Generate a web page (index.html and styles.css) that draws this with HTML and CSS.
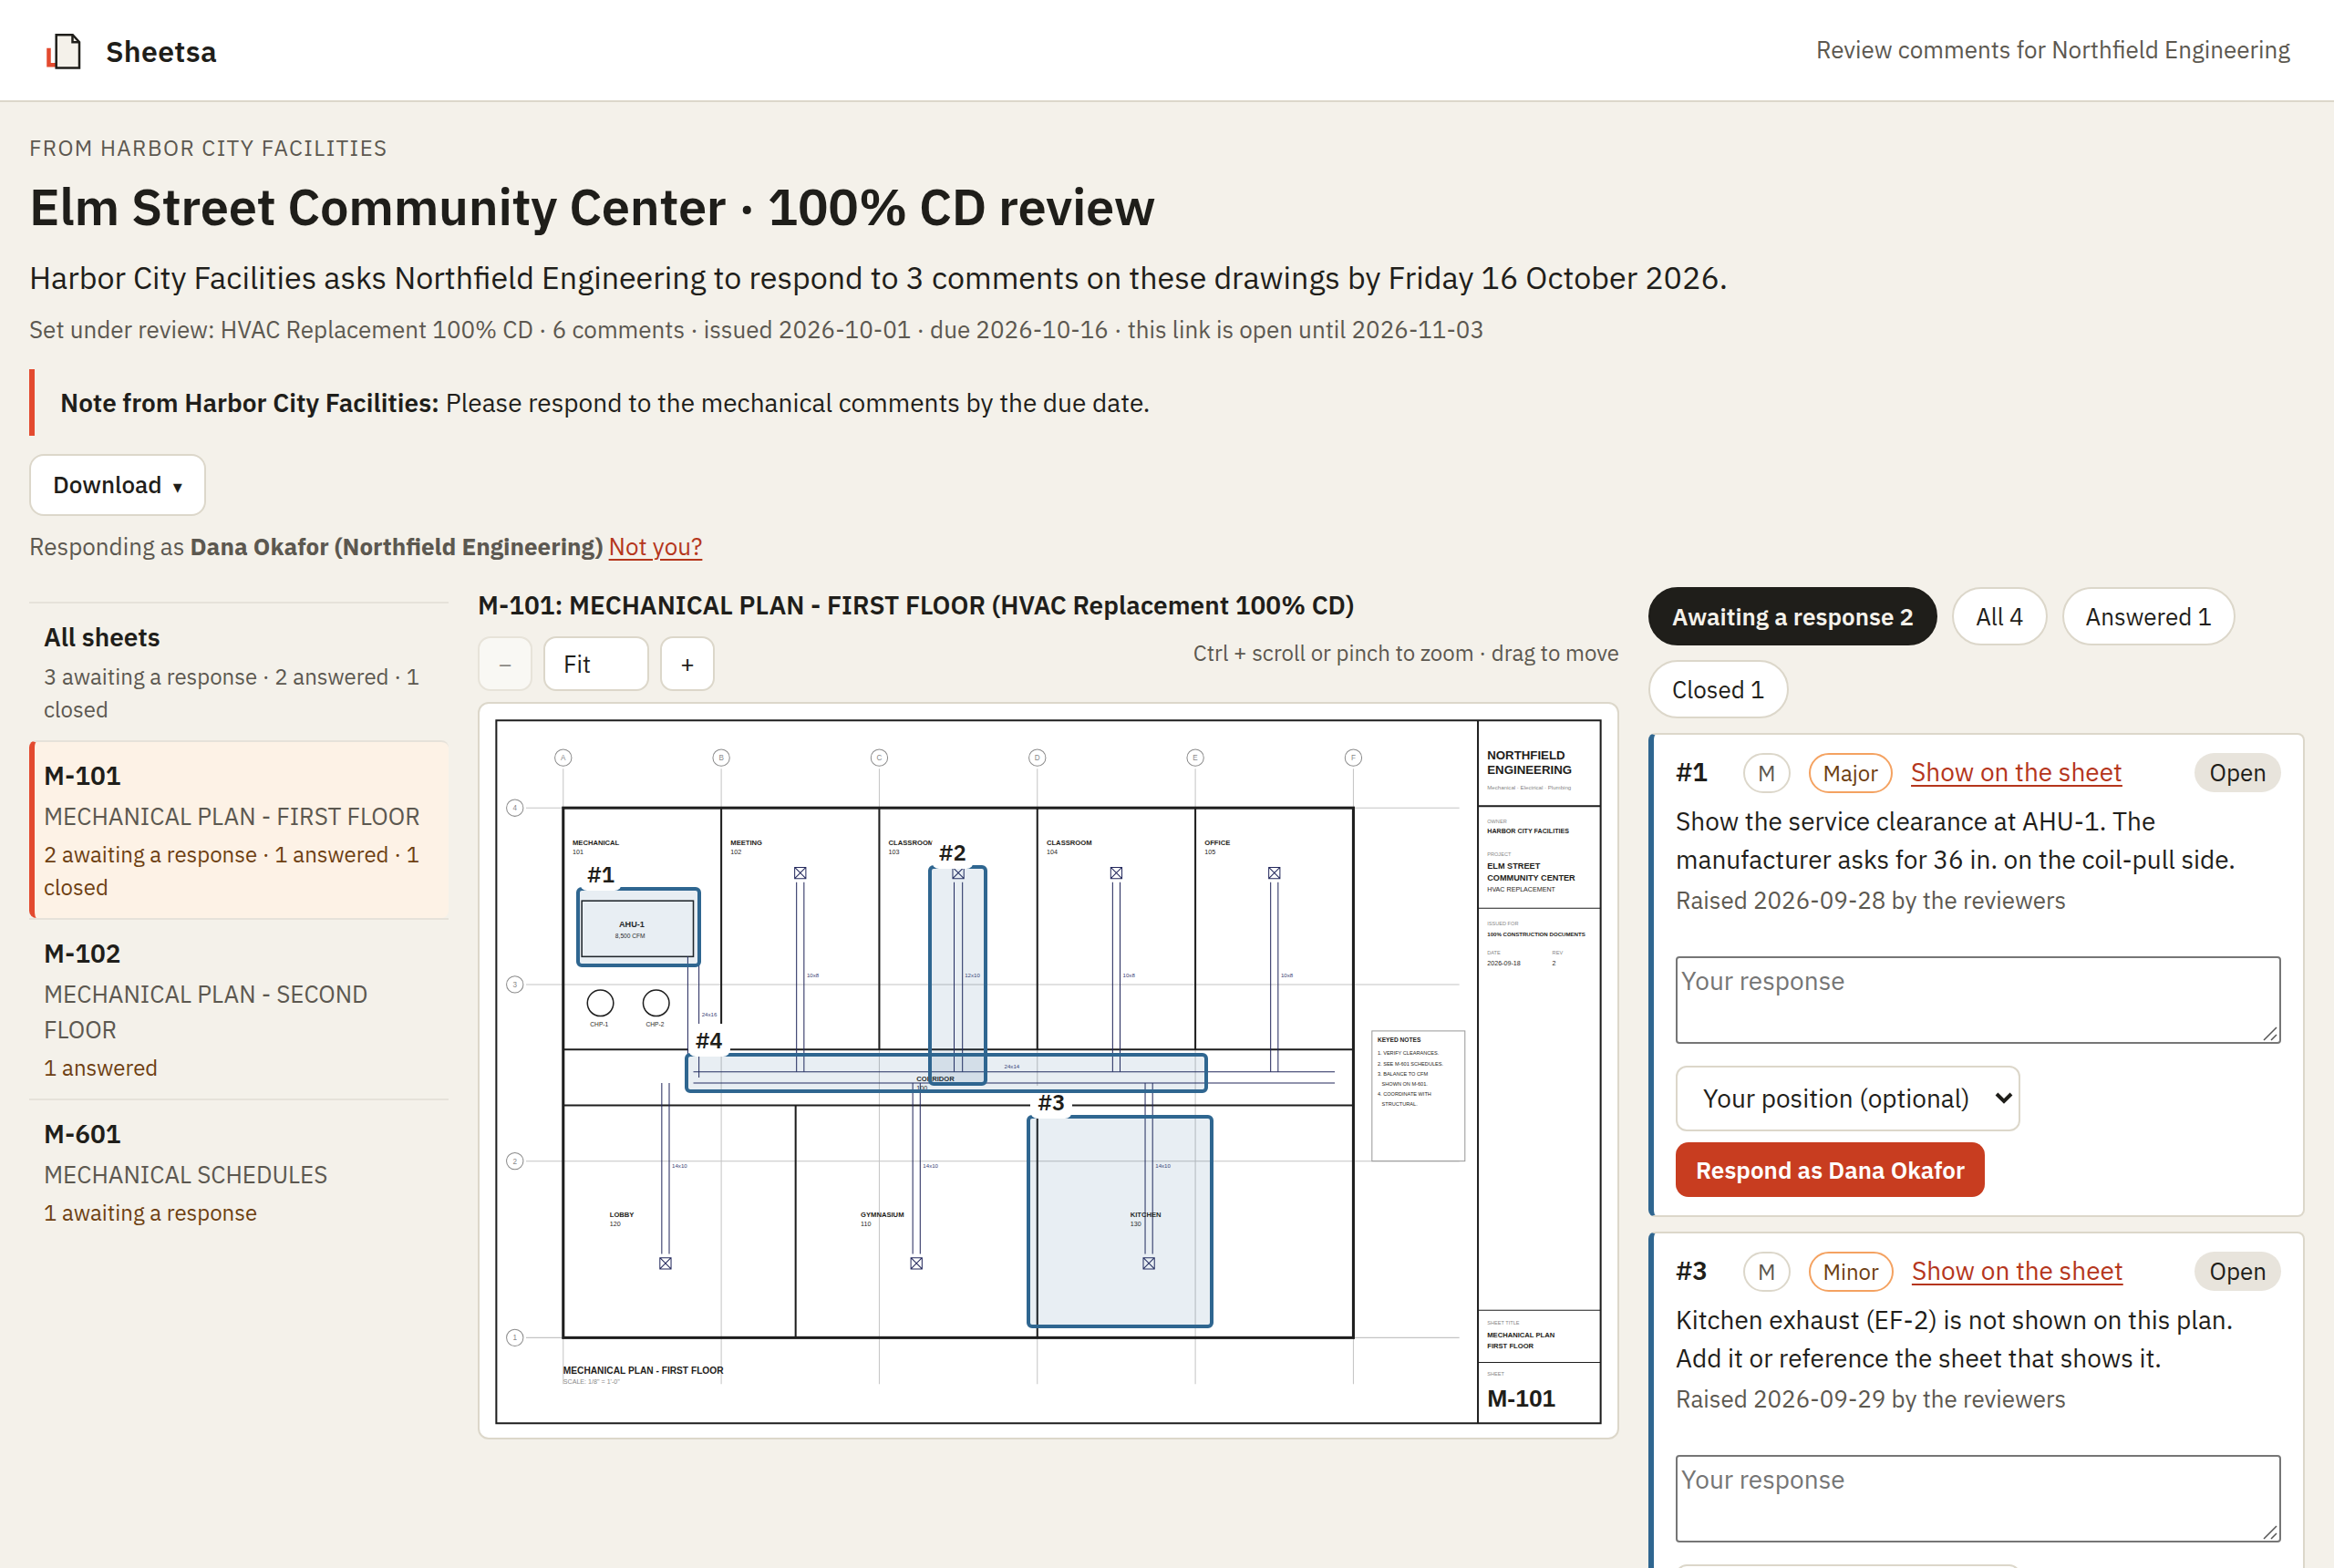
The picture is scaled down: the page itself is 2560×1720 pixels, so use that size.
FILE: index.html
```html
<!DOCTYPE html>
<html lang="en">
<head>
<meta charset="utf-8">
<title>Elm Street Community Center · 100% CD review</title>
<meta name="viewport" content="width=device-width, initial-scale=1">
<link rel="stylesheet" href="styles.css">
</head>
<body>
<header class="topbar">
  <a class="brand" href="#">
    <svg class="brand-mark" viewBox="0 0 48 48" aria-hidden="true">
      <path class="mark-back" d="M5.5 20.7v18.6h9"/>
      <path class="mark-page" d="M13.7 6.2h18l7.3 8v28.4H13.7z"/>
      <path class="mark-fold" d="M31.5 6.5v7.7h7.2"/>
    </svg>
    <span>Sheetsa</span>
  </a>
  <p class="topbar-note">Review comments for Northfield Engineering</p>
</header>

<main class="page">
  <section class="intro">
    <p class="eyebrow">From Harbor City Facilities</p>
    <h1 class="title">Elm Street Community Center · 100% CD review</h1>
    <p class="lead">Harbor City Facilities asks Northfield Engineering to respond to 3 comments on these drawings by Friday 16 October 2026.</p>
    <p class="meta">Set under review: HVAC Replacement 100% CD · 6 comments · issued 2026-10-01 · due 2026-10-16 · this link is open until 2026-11-03</p>
    <p class="note"><strong>Note from Harbor City Facilities:</strong> Please respond to the mechanical comments by the due date.</p>
    <button class="download" type="button">Download <span class="caret" aria-hidden="true">▾</span></button>
    <p class="identity">Responding as <strong class="identity-name">Dana Okafor (Northfield Engineering)</strong> <a href="#">Not you?</a></p>
  </section>

  <div class="workspace">
    <nav class="sheets" aria-label="Sheets">
      <a class="sheet-link" href="#">
        <span class="sheet-code">All sheets</span>
        <span class="sheet-count muted">3 awaiting a response · 2 answered · 1 closed</span>
      </a>
      <a class="sheet-link current" href="#" aria-current="page">
        <span class="sheet-code">M-101</span>
        <span class="sheet-name">MECHANICAL PLAN - FIRST FLOOR</span>
        <span class="sheet-count">2 awaiting a response · 1 answered · 1 closed</span>
      </a>
      <a class="sheet-link" href="#">
        <span class="sheet-code">M-102</span>
        <span class="sheet-name">MECHANICAL PLAN - SECOND FLOOR</span>
        <span class="sheet-count">1 answered</span>
      </a>
      <a class="sheet-link" href="#">
        <span class="sheet-code">M-601</span>
        <span class="sheet-name">MECHANICAL SCHEDULES</span>
        <span class="sheet-count">1 awaiting a response</span>
      </a>
    </nav>

    <section class="viewer">
      <h2 class="viewer-title">M-101: MECHANICAL PLAN - FIRST FLOOR (HVAC Replacement 100% CD)</h2>
      <div class="viewer-bar">
        <div class="zoom">
          <button class="zoom-btn" type="button" aria-label="Zoom out" disabled>−</button>
          <select class="zoom-level" aria-label="Zoom level"><option>Fit</option></select>
          <button class="zoom-btn" type="button" aria-label="Zoom in">+</button>
        </div>
        <p class="hint">Ctrl + scroll or pinch to zoom · drag to move</p>
      </div>
      <div class="sheet">
        <svg class="drawing" viewBox="0 0 2448 1580" role="img" aria-label="Mechanical plan, first floor">
          <defs>
            <g id="diffuser"><path d="M-12-12h24v24h-24zM-12-12l24 24M12-12l-24 24"/></g>
          </defs>
          <g class="grid">
            <path d="M180 140V1464M520 140V1464M860 140V1464M1200 140V1464M1540 140V1464M1880 140V1464"/>
            <path d="M100 224H2108M100 604H2108M100 984H2108M100 1364H2108"/>
          </g>
          <g class="bubbles">
            <circle cx="180" cy="116" r="18"/><circle cx="520" cy="116" r="18"/><circle cx="860" cy="116" r="18"/>
            <circle cx="1200" cy="116" r="18"/><circle cx="1540" cy="116" r="18"/><circle cx="1880" cy="116" r="18"/>
            <circle cx="76" cy="224" r="18"/><circle cx="76" cy="604" r="18"/><circle cx="76" cy="984" r="18"/><circle cx="76" cy="1364" r="18"/>
          </g>
          <g class="bubble-text">
            <text x="180" y="122">A</text><text x="520" y="122">B</text><text x="860" y="122">C</text>
            <text x="1200" y="122">D</text><text x="1540" y="122">E</text><text x="1880" y="122">F</text>
            <text x="76" y="230">4</text><text x="76" y="610">3</text><text x="76" y="990">2</text><text x="76" y="1370">1</text>
          </g>
          <path class="frame" d="M36 36H2412V1548H36zM2148 36V1548M2148 220H2412"/>
          <path class="rule" d="M2148 440H2412M2148 1305H2412M2148 1417H2412"/>
          <rect class="outer-wall" x="180" y="224" width="1700" height="1140"/>
          <path class="wall" d="M520 224V744M860 224V744M1200 224V744M1540 224V744M180 744H1880M180 864H1880M680 864V1364M1200 864V1364"/>
          <rect class="unit" x="220" y="424" width="240" height="120"/>
          <circle class="unit" cx="260" cy="644" r="28"/><circle class="unit" cx="380" cy="644" r="28"/>
          <g class="duct">
            <path d="M448 544V804M472 544V804M460 792H1840M460 816H1840"/>
            <path d="M682 384V792M698 384V792M1021 384V792M1039 384V792M1362 384V792M1378 384V792M1702 384V792M1718 384V792"/>
            <path d="M392 816V1184M408 816V1184M932 816V1184M948 816V1184M1432 816V1184M1448 816V1184"/>
            <use href="#diffuser" x="690" y="364"/><use href="#diffuser" x="1030" y="364"/><use href="#diffuser" x="1370" y="364"/><use href="#diffuser" x="1710" y="364"/>
            <use href="#diffuser" x="400" y="1204"/><use href="#diffuser" x="940" y="1204"/><use href="#diffuser" x="1440" y="1204"/>
          </g>
          <g class="duct-text">
            <text x="478" y="673">24x16</text><text x="1129" y="785">24x14</text>
            <text x="704" y="588">10x8</text><text x="1044" y="588">12x10</text><text x="1384" y="588">10x8</text><text x="1724" y="588">10x8</text>
            <text x="414" y="999">14x10</text><text x="954" y="999">14x10</text><text x="1454" y="999">14x10</text>
          </g>
          <g class="t15 bold">
            <text x="200" y="304">MECHANICAL</text><text x="540" y="304">MEETING</text><text x="880" y="304">CLASSROOM</text>
            <text x="1220" y="304">CLASSROOM</text><text x="1560" y="304">OFFICE</text><text x="940" y="812">CORRIDOR</text>
            <text x="280" y="1104">LOBBY</text><text x="820" y="1104">GYMNASIUM</text><text x="1400" y="1104">KITCHEN</text>
            <text x="2168" y="1364">MECHANICAL PLAN</text><text x="2168" y="1386">FIRST FLOOR</text>
          </g>
          <g class="t14">
            <text x="200" y="324">101</text><text x="540" y="324">102</text><text x="880" y="324">103</text>
            <text x="1220" y="324">104</text><text x="1560" y="324">105</text><text x="940" y="832">100</text>
            <text x="280" y="1124">120</text><text x="820" y="1124">110</text><text x="1400" y="1124">130</text>
            <text x="2168" y="404">HVAC REPLACEMENT</text><text x="2168" y="562">2026-09-18</text><text x="2308" y="562">2</text>
            <text class="bold" x="2168" y="279">HARBOR CITY FACILITIES</text>
            <text class="faint" x="180" y="1464">SCALE: 1/8" = 1'-0"</text>
          </g>
          <text class="t18 bold" x="300" y="480">AHU-1</text>
          <g class="t13">
            <text x="292" y="504">8,500 CFM</text><text x="238" y="695">CHP-1</text><text x="358" y="695">CHP-2</text>
            <text class="bold" x="1932" y="728">KEYED NOTES</text>
          </g>
          <rect class="notes-box" x="1920" y="704" width="200" height="280"/>
          <g class="t11">
            <text x="1932" y="756">1. VERIFY CLEARANCES.</text><text x="1932" y="778">2. SEE M-601 SCHEDULES.</text>
            <text x="1932" y="800">3. BALANCE TO CFM</text><text x="1941" y="822">SHOWN ON M-601.</text>
            <text x="1932" y="844">4. COORDINATE WITH</text><text x="1941" y="866">STRUCTURAL.</text>
          </g>
          <g class="t11 faint">
            <text x="2168" y="256">OWNER</text><text x="2168" y="328">PROJECT</text><text x="2168" y="476">ISSUED FOR</text>
            <text x="2168" y="540">DATE</text><text x="2308" y="540">REV</text><text x="2168" y="1336">SHEET TITLE</text><text x="2168" y="1445">SHEET</text>
          </g>
          <text class="t26 bold" x="2168" y="120">NORTHFIELD</text><text class="t26 bold" x="2168" y="152">ENGINEERING</text>
          <text class="t12 faint" x="2168" y="184">Mechanical · Electrical · Plumbing</text>
          <text class="t18 bold" x="2168" y="356">ELM STREET</text><text class="t18 bold" x="2168" y="380">COMMUNITY CENTER</text>
          <text class="t12 bold" x="2168" y="500">100% CONSTRUCTION DOCUMENTS</text>
          <text class="t20 bold" x="180" y="1442">MECHANICAL PLAN - FIRST FLOOR</text>
          <text class="t52 bold" x="2168" y="1512">M-101</text>
        </svg>
        <button class="pin pin-1" type="button"><span class="pin-label">#1</span></button>
        <button class="pin pin-2" type="button"><span class="pin-label">#2</span></button>
        <button class="pin pin-3" type="button"><span class="pin-label">#3</span></button>
        <button class="pin pin-4" type="button"><span class="pin-label">#4</span></button>
      </div>
    </section>

    <section class="comments" aria-label="Comments">
      <div class="filters">
        <button class="filter active" type="button" aria-pressed="true">Awaiting a response 2</button>
        <button class="filter" type="button">All 4</button>
        <button class="filter" type="button">Answered 1</button>
        <button class="filter" type="button">Closed 1</button>
      </div>

      <article class="card">
        <header class="card-head">
          <h3 class="card-number">#1</h3>
          <span class="tag">M</span>
          <span class="tag severity">Major</span>
          <a href="#">Show on the sheet</a>
          <span class="status">Open</span>
        </header>
        <p class="card-text">Show the service clearance at AHU-1. The manufacturer asks for 36 in. on the coil-pull side.</p>
        <p class="card-meta">Raised 2026-09-28 by the reviewers</p>
        <form class="reply">
          <textarea class="reply-text" aria-label="Your response to comment 1" placeholder="Your response"></textarea>
          <select class="reply-position" aria-label="Your position on comment 1"><option>Your position (optional)</option></select>
          <button class="reply-send" type="button">Respond as Dana Okafor</button>
        </form>
      </article>

      <article class="card">
        <header class="card-head">
          <h3 class="card-number">#3</h3>
          <span class="tag">M</span>
          <span class="tag severity">Minor</span>
          <a href="#">Show on the sheet</a>
          <span class="status">Open</span>
        </header>
        <p class="card-text">Kitchen exhaust (EF-2) is not shown on this plan. Add it or reference the sheet that shows it.</p>
        <p class="card-meta">Raised 2026-09-29 by the reviewers</p>
        <form class="reply">
          <textarea class="reply-text" aria-label="Your response to comment 3" placeholder="Your response"></textarea>
          <select class="reply-position" aria-label="Your position on comment 3"><option>Your position (optional)</option></select>
          <button class="reply-send" type="button">Respond as Dana Okafor</button>
        </form>
      </article>
    </section>
  </div>
</main>
</body>
</html>
```
FILE: styles.css
```css
:root {
  --ink: #1f1e1a;
  --muted: #5c5850;
  --paper: #f4f1ea;
  --line: #dcd7ca;
  --hairline: #e6e2da;
  --red: #e34a2f;
  --link: #b5361c;
  --brown: #6e4012;
  --blue: #2f6690;
}

* { box-sizing: border-box; }

body {
  margin: 0;
  background: var(--paper);
  color: var(--ink);
  font-family: "IBM Plex Sans", "Noto Sans", "Open Sans", sans-serif;
  font-size: 28px;
  line-height: 42px;
}

h1, h2, h3, p { margin: 0; }
button, select, textarea { font: inherit; color: inherit; margin: 0; }
a { color: var(--link); text-decoration-thickness: 2px; text-underline-offset: 4px; }
strong, h1, h2, h3 { font-weight: 600; }

.topbar {
  display: flex;
  align-items: center;
  justify-content: space-between;
  padding: 32px 48px 30px;
  background: #fff;
  border-bottom: 2px solid var(--line);
}
.brand {
  display: flex;
  align-items: center;
  gap: 20px;
  color: var(--ink);
  font-size: 32px;
  font-weight: 600;
  line-height: 48px;
  letter-spacing: .01em;
  text-decoration: none;
}
.brand-mark { width: 48px; height: 48px; }
.mark-back { fill: none; stroke: var(--red); stroke-width: 4.5; }
.mark-page { fill: var(--paper); stroke: var(--ink); stroke-width: 2.5; }
.mark-fold { fill: none; stroke: var(--ink); stroke-width: 2.5; }
.topbar-note { padding-bottom: 4px; color: var(--muted); font-size: 26px; line-height: 39px; }

.page { padding: 32px 32px 48px; }
.intro { display: flex; flex-direction: column; align-items: flex-start; }
.eyebrow {
  color: var(--muted);
  font-size: 24px;
  line-height: 36px;
  letter-spacing: .06em;
  text-transform: uppercase;
}
.title { margin-top: 12px; font-size: 56px; line-height: 68px; letter-spacing: -.005em; }
.lead { margin-top: 18px; font-size: 34px; line-height: 52px; }
.meta { margin-top: 12px; color: var(--muted); font-size: 26px; line-height: 39px; }
.note { margin-top: 24px; padding: 16px 28px; border-left: 6px solid var(--red); line-height: 41px; }
.download {
  margin-top: 20px;
  height: 68px;
  padding: 0 24px;
  background: #fff;
  border: 2px solid var(--line);
  border-radius: 16px;
  font-size: 26px;
  font-weight: 500;
}
.caret { margin-left: 6px; font-family: "DejaVu Sans", sans-serif; font-size: 20px; }
.identity { margin-top: 14px; color: var(--muted); font-size: 26px; line-height: 39px; }
.identity-name { font-weight: 700; }

.workspace {
  display: grid;
  grid-template-columns: 460px minmax(0, 1fr) 720px;
  gap: 32px;
  align-items: start;
  margin-top: 25px;
}

.sheets { display: flex; flex-direction: column; margin-top: 16px; }
.sheet-link {
  display: flex;
  flex-direction: column;
  gap: 4px;
  padding: 16px;
  border-top: 2px solid var(--hairline);
  color: var(--ink);
  text-decoration: none;
}
.sheet-link.current {
  padding-left: 10px;
  background: #fdf2e6;
  border-left: 6px solid var(--red);
  border-radius: 8px;
}
.sheet-code { font-weight: 600; }
.sheet-name { color: var(--muted); font-size: 26px; line-height: 39px; }
.sheet-count { color: var(--brown); font-size: 24px; line-height: 36px; }
.sheet-count.muted { color: var(--muted); }

.viewer-title { font-size: 28px; line-height: 40px; }
.viewer-bar { display: flex; justify-content: space-between; align-items: flex-start; margin-top: 14px; }
.zoom { display: flex; gap: 12px; }
.zoom-btn, .zoom-level {
  height: 60px;
  background: #fff;
  border: 2px solid var(--line);
  border-radius: 14px;
  font-size: 26px;
}
.zoom-btn { width: 60px; padding: 0; }
.zoom-btn:disabled { opacity: .5; }
.zoom-level { width: 116px; padding: 0 20px; appearance: none; }
.hint { color: var(--muted); font-size: 24px; line-height: 36px; }

.sheet {
  position: relative;
  margin-top: 12px;
  background: #fff;
  border: 2px solid var(--line);
  border-radius: 12px;
}
.drawing { display: block; width: 100%; font-family: "Liberation Sans", Arial, sans-serif; fill: var(--ink); }
.grid, .notes-box { fill: none; stroke: #c4c4c4; stroke-width: 2; }
.notes-box { stroke: #999; }
.bubbles { fill: #fff; stroke: #8a8a8a; stroke-width: 2; }
.bubble-text { fill: #888; font-size: 16px; text-anchor: middle; }
.frame, .outer-wall, .wall, .rule, .unit { fill: none; stroke: #1e1e1e; }
.frame { stroke-width: 4; }
.rule { stroke-width: 2; }
.outer-wall { stroke-width: 6; }
.wall { stroke-width: 4; }
.unit { stroke-width: 3; }
.duct { fill: none; stroke: #23285c; stroke-width: 2; }
.duct-text { fill: #3a4276; font-size: 12px; }
.bold { font-weight: 700; }
.faint { fill: #888; }
.t11 { font-size: 11px; }
.t12 { font-size: 12px; }
.t13 { font-size: 13px; }
.t14 { font-size: 14px; }
.t15 { font-size: 15px; }
.t18 { font-size: 18px; }
.t20 { font-size: 20px; }
.t26 { font-size: 26px; }
.t52 { font-size: 52px; }

.pin {
  position: absolute;
  padding: 0;
  border: 4px solid var(--blue);
  border-radius: 6px;
  background: rgba(47, 102, 144, .11);
}
.pin-label {
  position: absolute;
  left: 0;
  bottom: 100%;
  padding: 0 8px;
  border-radius: 8px;
  background: #fff;
  color: var(--ink);
  font-size: 24px;
  font-weight: 600;
  line-height: 36px;
}
.pin-1 { left: 8.5%; top: 25%; width: 11%; height: 10.9%; }
.pin-2 { left: 39.4%; top: 22%; width: 5.2%; height: 30%; }
.pin-3 { left: 48.1%; top: 56%; width: 16.4%; height: 29%; }
.pin-4 { left: 18%; top: 47.6%; width: 46%; height: 5.4%; }

.comments { display: flex; flex-direction: column; gap: 16px; }
.filters { display: flex; flex-wrap: wrap; gap: 16px; }
.filter {
  height: 64px;
  padding: 0 24px;
  background: #fff;
  border: 2px solid var(--line);
  border-radius: 32px;
  font-size: 26px;
}
.filter.active { background: var(--ink); border-color: var(--ink); color: var(--paper); font-weight: 600; }

.card {
  padding: 20px 24px;
  background: #fff;
  border: 2px solid var(--line);
  border-left: 6px solid var(--blue);
  border-radius: 8px;
}
.card-head { display: flex; align-items: baseline; gap: 20px; }
.card-number { min-width: 54px; font-size: 28px; }
.tag {
  padding: 2px 14px;
  border: 2px solid var(--line);
  border-radius: 22px;
  color: var(--muted);
  font-size: 24px;
  line-height: 36px;
}
.severity { border-color: #f4a261; color: var(--brown); }
.status {
  margin-left: auto;
  padding: 2px 16px;
  border-radius: 22px;
  background: #e8e4dc;
  font-size: 26px;
  line-height: 39px;
}
.card-text { margin-top: 10px; }
.card-meta { margin-top: 4px; color: var(--muted); font-size: 26px; line-height: 39px; }
.reply { display: flex; flex-direction: column; align-items: flex-start; margin-top: 42px; }
.reply-text {
  width: 100%;
  height: 96px;
  padding: 4px;
  border: 2px solid #767676;
  border-radius: 4px;
  resize: none;
  background: #fff url("data:image/svg+xml,%3Csvg xmlns='http://www.w3.org/2000/svg' width='18' height='18'%3E%3Cpath d='M1 16L15 2M9 16l6-6' stroke='%23555' stroke-width='1.5'/%3E%3C/svg%3E") no-repeat right bottom;
}
.reply-text::placeholder { color: #757575; }
.reply-position {
  width: 378px;
  height: 72px;
  margin-top: 24px;
  padding: 0 28px;
  appearance: none;
  border: 2px solid var(--line);
  border-radius: 12px;
  background: #fff url("data:image/svg+xml,%3Csvg xmlns='http://www.w3.org/2000/svg' width='20' height='14'%3E%3Cpath d='M2 2l8 8 8-8' fill='none' stroke='%231f1e1a' stroke-width='4'/%3E%3C/svg%3E") no-repeat right 6px center;
}
.reply-send {
  height: 60px;
  margin-top: 12px;
  padding: 0 22px;
  border: 0;
  border-radius: 14px;
  background: #c83d20;
  color: #fff;
  font-size: 26px;
  font-weight: 600;
}
```
